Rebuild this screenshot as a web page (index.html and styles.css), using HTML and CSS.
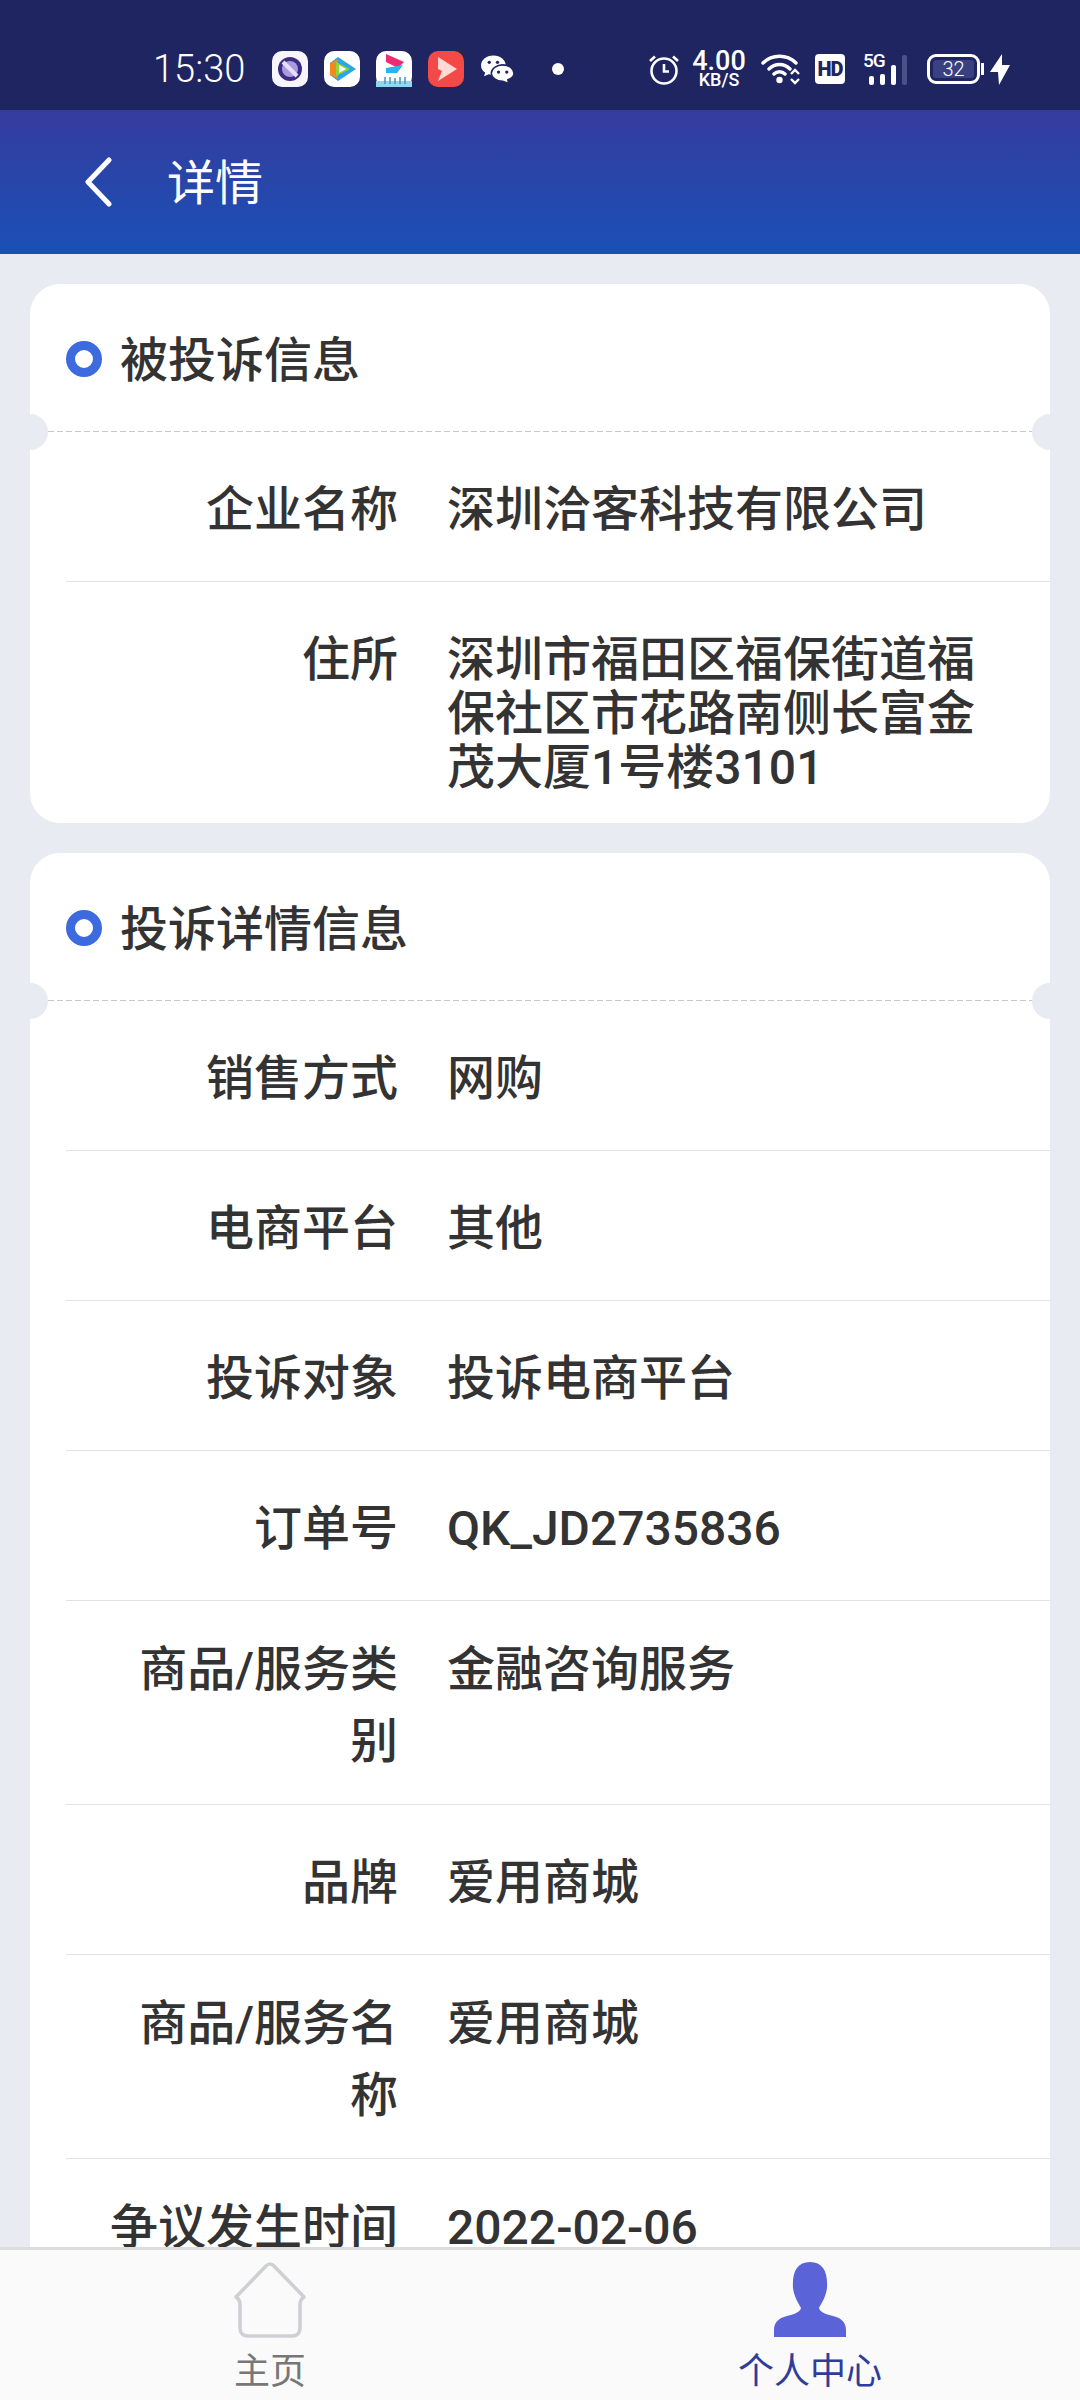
FILE: index.html
```html
<!DOCTYPE html>
<html>

<head>
<meta charset="utf-8">
<title>详情</title>
<link rel="stylesheet" href="styles.css">
</head>

<body>
    <div class="page">
        <!-- status bar -->
        <div class="status">
            <span class="time">15:30</span>
            <div class="apps">
                <svg class="app" viewBox="0 0 36 36"><rect width="36" height="36" rx="10" fill="#f7f5fb"/><circle cx="18" cy="18" r="12" fill="#3c2c80"/><circle cx="18" cy="18" r="8" fill="#a99be0"/><path d="M11 11 L25 25" stroke="#eadcff" stroke-width="4"/></svg>
                <svg class="app" viewBox="0 0 36 36"><rect width="36" height="36" rx="10" fill="#fff"/><path d="M6 12 L14 6 L32 18 L14 30 L6 24 Z" fill="#2aa5e8"/><path d="M6 12 L14 8 V28 L6 24 Z" fill="#f08a1c"/><path d="M12 11 L26 18 L12 25 Z" fill="#8fd43a"/><path d="M15 14 L22 18 L15 22 Z" fill="#fff"/></svg>
                <svg class="app" viewBox="0 0 36 36"><rect width="36" height="36" rx="10" fill="#fff"/><path d="M10 3 L28 11 L22 17 L10 11 Z" fill="#ee2a73"/><path d="M27 14 L21 22 H10 V17 Z" fill="#27b4f0"/><rect x="0" y="30" width="36" height="6" fill="#8fd6ee"/><path d="M9 26 V33 M14 26 V33 M19 27 V33 M24 26 V33 M29 26 V33" stroke="#3b9ac4" stroke-width="1.500"/></svg>
                <svg class="app" viewBox="0 0 36 36"><rect width="36" height="36" rx="10" fill="#f44a47"/><path d="M10 6 L29 18 L10 30 L14 20 L10 18 Z" fill="#ffd9d4"/></svg>
                <svg class="wechat" viewBox="0 0 32 28"><path d="M12 1 C5 1 0 5.500 0 10.500 C0 13.500 1.500 15.500 4 17.500 L3 21 L7.500 19 C9 19.500 10.500 19.500 12 19.500 C19 19.500 24 15.500 24 10.500 C24 5.500 19 1 12 1 Z" fill="#fff"/><path d="M21 10 C15 10 10 13.500 10 18 C10 22.500 15 26 21 26 L27 28 L26 24.500 C29.500 23 32 21 32 18 C32 13.500 27 10 21 10 Z" fill="#fff" stroke="#1e2560" stroke-width="1.500"/><circle cx="8" cy="7.500" r="1.600" fill="#1e2560"/><circle cx="16" cy="7.500" r="1.600" fill="#1e2560"/><circle cx="17" cy="17" r="1.600" fill="#1e2560"/><circle cx="25" cy="17" r="1.600" fill="#1e2560"/></svg>
                <span class="more"></span>
            </div>
            <div class="sys">
                <svg class="alarm" viewBox="0 0 30 32"><circle cx="15" cy="18" r="12.500" fill="none" stroke="#fff" stroke-width="2.600"/><path d="M15 11 V18.500 H20" fill="none" stroke="#fff" stroke-width="2.600"/><path d="M1 8 L6 3.500 M29 8 L24 3.500" stroke="#fff" stroke-width="2.600"/></svg>
                <div class="speed"><b>4.00</b><span>KB/S</span></div>
                <svg class="wifi" viewBox="0 0 40 32"><path d="M2 10 C11 1 26 1 35 10 M8 16 C14 10 23 10 29 16 M13 21 C16 18 21 18 24 21" fill="none" stroke="#fff" stroke-width="3.400" stroke-linecap="round"/><circle cx="18.500" cy="27" r="3.200" fill="#fff"/><path d="M30 21 L34 17 L38 21 M30 26 L34 30 L38 26" fill="none" stroke="#fff" stroke-width="2.400"/></svg>
                <span class="hd">HD</span>
                <div class="signal">
                    <span class="fiveg">5G</span>
                    <i class="bar b1"></i><i class="bar b2"></i><i class="bar b3"></i><i class="bar b4"></i>
                </div>
                <div class="battery"><span class="level">32</span></div>
                <span class="cap"></span>
                <svg class="bolt" viewBox="0 0 20 31"><path d="M12 0 L0 18 H8 L9 31 L20 11 H12 Z" fill="#fff"/></svg>
            </div>
        </div>

        <!-- title bar -->
        <div class="header">
            <svg class="back" viewBox="0 0 28 50"><path d="M25 3 L4 25 L25 47" fill="none" stroke="#fff" stroke-width="5" stroke-linecap="round" stroke-linejoin="round"/></svg>
            <span class="header-title">详情</span>
        </div>

        <div class="content">
            <div class="card">
                <div class="card-head"><span class="ring"></span>被投诉信息</div>
                <div class="row">
                    <div class="label">企业名称</div>
                    <div class="value">深圳洽客科技有限公司</div>
                </div>
                <div class="row row-address">
                    <div class="label">住所</div>
                    <div class="value">深圳市福田区福保街道福保社区市花路南侧长富金茂大厦1号楼3101</div>
                </div>
            </div>

            <div class="card">
                <div class="card-head"><span class="ring"></span>投诉详情信息</div>
                <div class="row">
                    <div class="label">销售方式</div>
                    <div class="value">网购</div>
                </div>
                <div class="row">
                    <div class="label">电商平台</div>
                    <div class="value">其他</div>
                </div>
                <div class="row">
                    <div class="label">投诉对象</div>
                    <div class="value">投诉电商平台</div>
                </div>
                <div class="row">
                    <div class="label">订单号</div>
                    <div class="value">QK_JD2735836</div>
                </div>
                <div class="row row-tall">
                    <div class="label">商品/服务类别</div>
                    <div class="value">金融咨询服务</div>
                </div>
                <div class="row">
                    <div class="label">品牌</div>
                    <div class="value">爱用商城</div>
                </div>
                <div class="row row-tall">
                    <div class="label">商品/服务名称</div>
                    <div class="value">爱用商城</div>
                </div>
                <div class="row row-last">
                    <div class="label">争议发生时间</div>
                    <div class="value">2022-02-06</div>
                </div>
            </div>
        </div>

        <!-- bottom tabs -->
        <div class="tabs">
            <div class="tab">
                <svg class="tab-icon" viewBox="0 0 74 76"><path d="M37 2 C35.500 2 34.500 2.500 33 4 L3 35 C6 37 7 39 7 42 V66 C7 71 10 74 15 74 H59 C64 74 67 71 67 66 V42 C67 39 68 37 71 35 L41 4 C39.500 2.500 38.500 2 37 2 Z" fill="none" stroke="#cfd0d6" stroke-width="3.600" stroke-linejoin="round"/></svg>
                <span class="tab-text">主页</span>
            </div>
            <div class="tab tab-on">
                <svg class="tab-icon" viewBox="0 0 74 76"><path d="M37 0 C50 0 55 10 54 26 C53 35 48 42 46 46 C47 50 52 52 60 54 C69 56 73 61 73 68 V75 H1 V68 C1 61 5 56 14 54 C22 52 27 50 28 46 C26 42 21 35 20 26 C19 10 24 0 37 0 Z" fill="#5a64d8"/></svg>
                <span class="tab-text">个人中心</span>
            </div>
        </div>
    </div>
</body>

</html>
```

FILE: styles.css
```css
* {
    box-sizing: border-box;
}

body {
    margin: 0;
    font-family: Roboto, "Noto Sans CJK SC", sans-serif;
    color: #333;
}

.page {
    width: 1080px;
    height: 2400px;
    display: flex;
    flex-direction: column;
    overflow: hidden;
    background-color: #e8ebf1;
}

/* status bar */
.status {
    height: 110px;
    flex: none;
    display: flex;
    align-items: center;
    padding-left: 153px;
    padding-top: 28px;
    background-color: #1e2560;
    color: #fff;
}

.time {
    font-size: 38px;
    font-weight: 300;
    width: 119px;
}

.apps {
    display: flex;
    align-items: center;
    gap: 16px;
}

.app {
    width: 36px;
    height: 36px;
}

.wechat {
    width: 33px;
    height: 30px;
    margin-left: 1px;
}

.more {
    width: 12px;
    height: 12px;
    margin-left: 22px;
    border-radius: 50%;
    background-color: #fff;
}

.sys {
    display: flex;
    align-items: center;
    margin-left: 85px;
}

.alarm {
    width: 30px;
    height: 32px;
}

.speed {
    display: flex;
    flex-direction: column;
    align-items: center;
    width: 54px;
    margin-left: 13px;
    line-height: 1;
}

.speed b {
    font-size: 27px;
    font-weight: 500;
    line-height: 22px;
}

.speed span {
    font-size: 18px;
    font-weight: 500;
    line-height: 16px;
}

.wifi {
    width: 40px;
    height: 32px;
    margin-left: 15px;
}

.hd {
    width: 30px;
    height: 30px;
    margin-left: 14px;
    border-radius: 4px;
    background-color: #fff;
    color: #1e2560;
    font-size: 20px;
    font-weight: 900;
    line-height: 30px;
    text-align: center;
    letter-spacing: -1px;
}

.signal {
    width: 46px;
    height: 32px;
    margin-left: 18px;
    position: relative;
}

.fiveg {
    position: absolute;
    left: 0;
    top: -4px;
    font-size: 19px;
    font-weight: 500;
    letter-spacing: -1px;
}

.bar {
    position: absolute;
    bottom: 0;
    width: 5px;
    border-radius: 2px;
    background-color: #fff;
}

.b1 { left: 6px; height: 9px; }
.b2 { left: 17px; height: 11px; }
.b3 { left: 28px; height: 20px; }
.b4 { left: 39px; height: 30px; background-color: #4a5088; }

.battery {
    width: 53px;
    height: 30px;
    margin-left: 18px;
    padding: 3px;
    border: 3px solid #fff;
    border-radius: 9px;
}

.level {
    display: block;
    width: 100%;
    height: 18px;
    border-radius: 3px;
    background-color: #3a4180;
    font-size: 20px;
    font-weight: 300;
    line-height: 18px;
    text-align: center;
}

.cap {
    width: 3px;
    height: 12px;
    margin-left: 1px;
    background-color: #fff;
}

.bolt {
    width: 20px;
    height: 31px;
    margin-left: 6px;
}

/* title bar */
.header {
    height: 144px;
    flex: none;
    display: flex;
    align-items: center;
    padding-left: 84px;
    background: linear-gradient(to bottom, #353c9e, #1a50b6);
    color: #fff;
}

.back {
    width: 28px;
    height: 50px;
}

.header-title {
    margin-left: 55px;
    margin-bottom: 6px;
    font-size: 48px;
    font-weight: 400;
}

/* cards */
.content {
    flex: 1;
    min-height: 0;
    overflow: hidden;
    padding: 30px 30px 0;
    display: flex;
    flex-direction: column;
    gap: 30px;
}

.card {
    flex: none;
    background-color: #fff;
    border-radius: 30px;
    overflow: hidden;
}

.card-head {
    height: 148px;
    display: flex;
    align-items: center;
    padding-left: 36px;
    padding-bottom: 4px;
    font-size: 48px;
    font-weight: 500;
    position: relative;
    background: repeating-linear-gradient(to right, #c8c8c8 0 6px, transparent 6px 9px) left bottom / 100% 1px no-repeat;
}

.card-head::before,
.card-head::after {
    content: "";
    position: absolute;
    bottom: -18px;
    width: 36px;
    height: 36px;
    border-radius: 50%;
    background-color: #e8ebf1;
    z-index: 1;
}

.card-head::before {
    left: -18px;
}

.card-head::after {
    right: -18px;
}

.ring {
    width: 36px;
    height: 36px;
    margin-top: 6px;
    margin-right: 18px;
    border: 9px solid #3c6be0;
    border-radius: 50%;
}

.row {
    margin-left: 36px;
    min-height: 150px;
    padding-top: 42px;
    display: flex;
    align-items: flex-start;
    font-size: 48px;
    font-weight: 500;
    border-bottom: 1px solid #e2e2e2;
}

.row:last-child {
    border-bottom: 0;
}

.row-address {
    padding-bottom: 28px;
}

.row-tall {
    min-height: 204px;
    padding-top: 33px;
}

.row-last {
    padding-top: 33px;
}

.label {
    width: 296px;
    flex: none;
    margin-left: 36px;
    line-height: 72px;
    text-align: right;
}

.value {
    flex: 1;
    margin-left: 49px;
    padding-right: 40px;
    line-height: 72px;
}

.row-address .value {
    line-height: 54px;
    padding-top: 9px;
}

/* bottom tabs */
.tabs {
    height: 153px;
    flex: none;
    display: flex;
    border-top: 3px solid #dcdcdc;
    background-color: #fafafa;
    position: relative;
    z-index: 2;
}

.tab {
    flex: 1;
    display: flex;
    flex-direction: column;
    align-items: center;
    padding-top: 12px;
}

.tab-icon {
    width: 74px;
    height: 76px;
}

.tab-text {
    margin-top: 10px;
    font-size: 36px;
    font-weight: 400;
    line-height: 48px;
    color: #777;
}

.tab-on .tab-text {
    color: #2f3c9c;
}
```
